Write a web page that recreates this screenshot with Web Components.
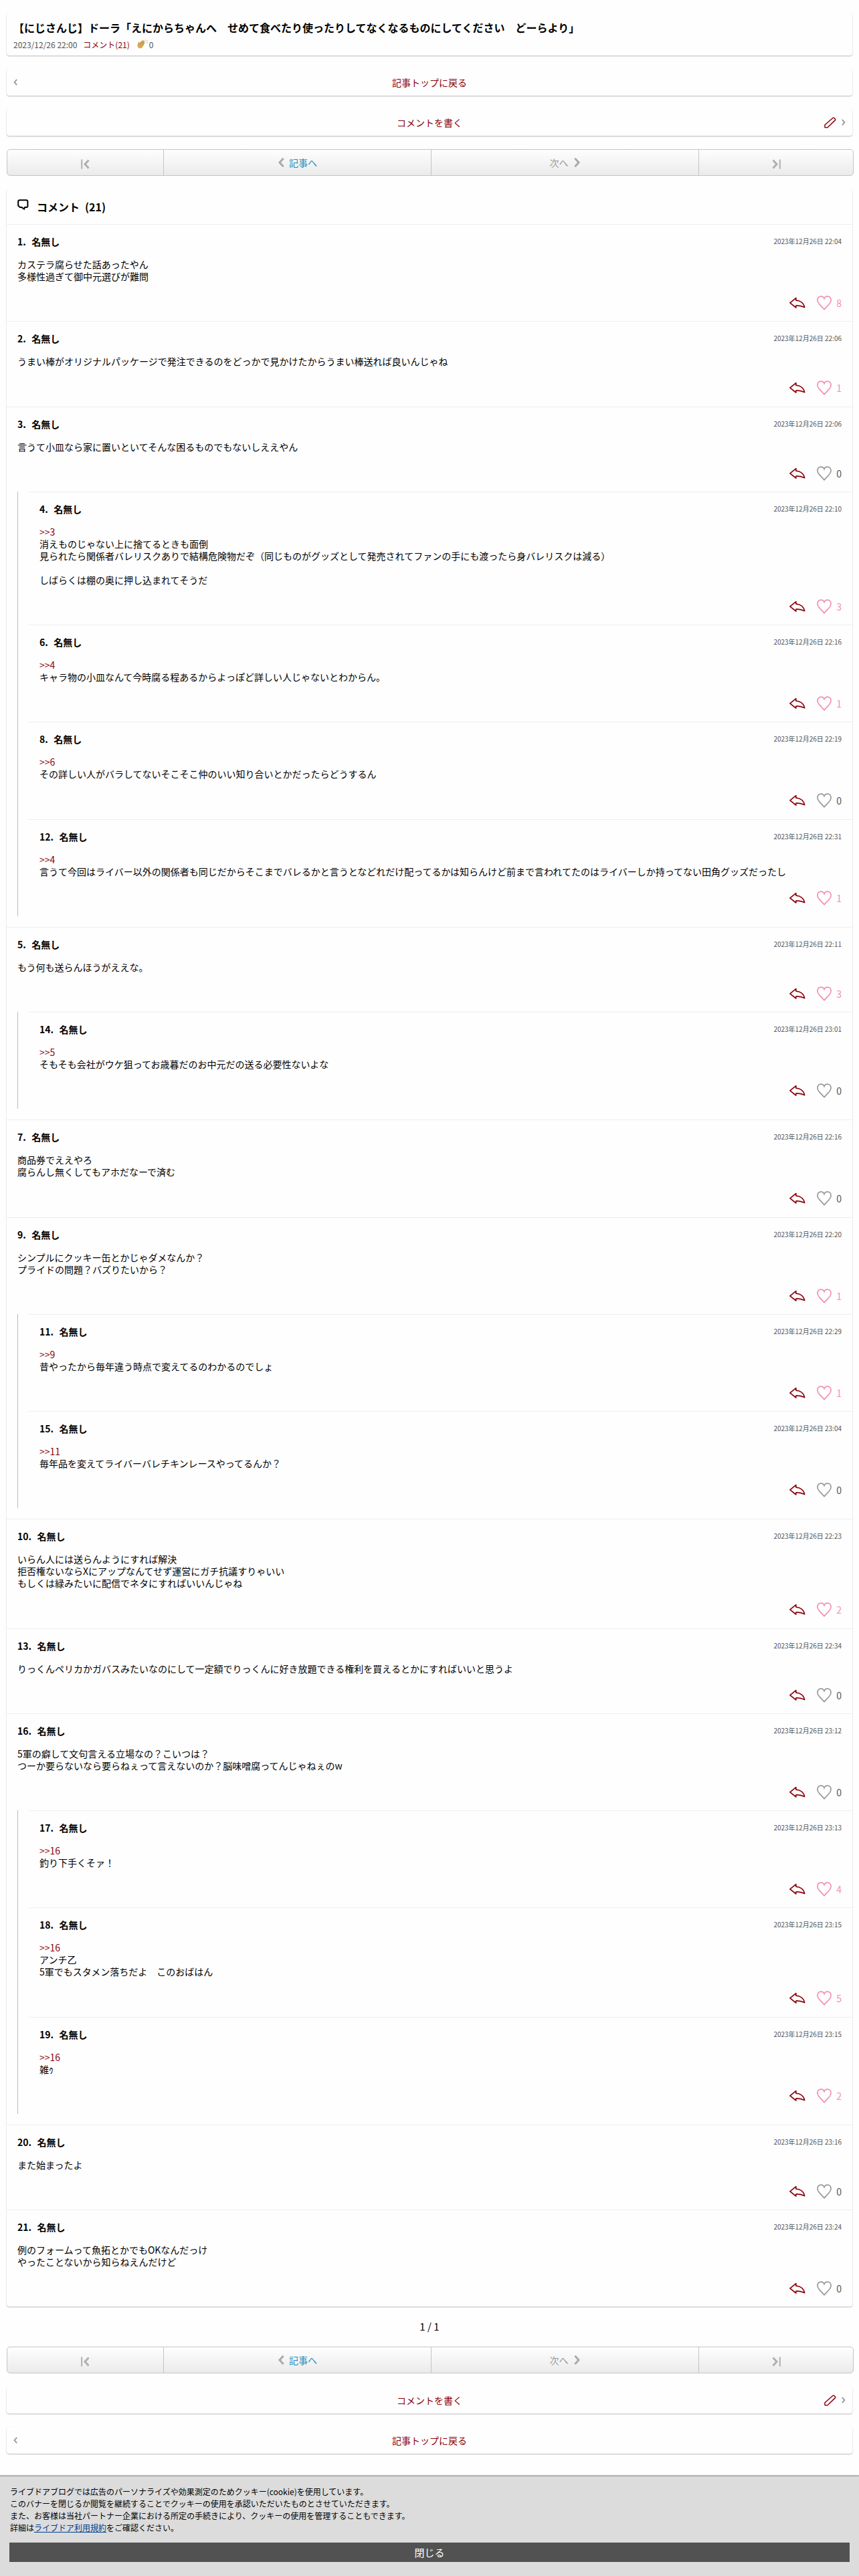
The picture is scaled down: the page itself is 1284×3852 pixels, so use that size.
<!DOCTYPE html>
<html lang="ja">
<head>
<meta charset="utf-8">
<title>コメント一覧</title>
<style>
html,body{margin:0;padding:0}
body{background:#fefefe;color:#000;font:14px/18px "Noto Sans CJK JP",sans-serif}
a{color:#8c0009;text-decoration:none}
</style>
</head>
<body>
<blog-page>
  <entry-head date="2023/12/26 22:00" comments="21" claps="0">【にじさんじ】ドーラ「えにからちゃんへ　せめて食べたり使ったりしてなくなるものにしてください　どーらより」</entry-head>
  <link-card back>記事トップに戻る</link-card>
  <link-card write>コメントを書く</link-card>
  <page-nav></page-nav>
  <comment-list count="21">
    <comment-item no="1" time="22:04" likes="8">カステラ腐らせた話あったやん<br>多様性過ぎて御中元選びが難問</comment-item>
    <comment-item no="2" time="22:06" likes="1">うまい棒がオリジナルパッケージで発注できるのをどっかで見かけたからうまい棒送れば良いんじゃね</comment-item>
    <comment-item no="3" time="22:06" likes="0">言うて小皿なら家に置いといてそんな困るものでもないしええやん</comment-item>
    <reply-thread>
      <comment-item no="4" time="22:10" likes="3"><a>&gt;&gt;3</a><br>消えものじゃない上に捨てるときも面倒<br>見られたら関係者バレリスクありで結構危険物だぞ（同じものがグッズとして発売されてファンの手にも渡ったら身バレリスクは減る）<br><br>しばらくは棚の奥に押し込まれてそうだ</comment-item>
      <comment-item no="6" time="22:16" likes="1"><a>&gt;&gt;4</a><br>キャラ物の小皿なんて今時腐る程あるからよっぽど詳しい人じゃないとわからん。</comment-item>
      <comment-item no="8" time="22:19" likes="0"><a>&gt;&gt;6</a><br>その詳しい人がバラしてないそこそこ仲のいい知り合いとかだったらどうするん</comment-item>
      <comment-item no="12" time="22:31" likes="1"><a>&gt;&gt;4</a><br>言うて今回はライバー以外の関係者も同じだからそこまでバレるかと言うとなどれだけ配ってるかは知らんけど前まで言われてたのはライバーしか持ってない田角グッズだったし</comment-item>
    </reply-thread>
    <comment-item no="5" time="22:11" likes="3">もう何も送らんほうがええな。</comment-item>
    <reply-thread>
      <comment-item no="14" time="23:01" likes="0"><a>&gt;&gt;5</a><br>そもそも会社がウケ狙ってお歳暮だのお中元だの送る必要性ないよな</comment-item>
    </reply-thread>
    <comment-item no="7" time="22:16" likes="0">商品券でええやろ<br>腐らんし無くしてもアホだなーで済む</comment-item>
    <comment-item no="9" time="22:20" likes="1">シンプルにクッキー缶とかじゃダメなんか？<br>プライドの問題？バズりたいから？</comment-item>
    <reply-thread>
      <comment-item no="11" time="22:29" likes="1"><a>&gt;&gt;9</a><br>昔やったから毎年違う時点で変えてるのわかるのでしょ</comment-item>
      <comment-item no="15" time="23:04" likes="0"><a>&gt;&gt;11</a><br>毎年品を変えてライバーバレチキンレースやってるんか？</comment-item>
    </reply-thread>
    <comment-item no="10" time="22:23" likes="2">いらん人には送らんようにすれば解決<br>拒否権ないならXにアップなんてせず運営にガチ抗議すりゃいい<br>もしくは緑みたいに配信でネタにすればいいんじゃね</comment-item>
    <comment-item no="13" time="22:34" likes="0">りっくんペリカかガバスみたいなのにして一定額でりっくんに好き放題できる権利を買えるとかにすればいいと思うよ</comment-item>
    <comment-item no="16" time="23:12" likes="0">5軍の癖して文句言える立場なの？こいつは？<br>つーか要らないなら要らねぇって言えないのか？脳味噌腐ってんじゃねぇのw</comment-item>
    <reply-thread>
      <comment-item no="17" time="23:13" likes="4"><a>&gt;&gt;16</a><br>釣り下手くそァ！</comment-item>
      <comment-item no="18" time="23:15" likes="5"><a>&gt;&gt;16</a><br>アンチ乙<br>5軍でもスタメン落ちだよ　このおばはん</comment-item>
      <comment-item no="19" time="23:15" likes="2"><a>&gt;&gt;16</a><br>雑ｩ</comment-item>
    </reply-thread>
    <comment-item no="20" time="23:16" likes="0">また始まったよ</comment-item>
    <comment-item no="21" time="23:24" likes="0">例のフォームって魚拓とかでもOKなんだっけ<br>やったことないから知らねえんだけど</comment-item>
  </comment-list>
  <page-count>1 / 1</page-count>
  <page-nav></page-nav>
  <link-card write>コメントを書く</link-card>
  <link-card back>記事トップに戻る</link-card>
</blog-page>
<cookie-banner></cookie-banner>

<script>
const ICONS = {
  bubble: [17, 17, '<path d="M3.4 1.3h9.8q2.2 0 2.2 2.2v6.6q0 2-2 2h-2.6l-.6 2.7-3.6-2.7H4L1.2 9.6V3.5q0-2.2 2.2-2.2z" fill="none" stroke="#000" stroke-width="2" stroke-linejoin="round"/>'],
  left: [6, 10, '<path d="M5.2 .8L1.6 5l3.6 4.2" fill="none" stroke="#999" stroke-width="1.9"/>'],
  right: [6, 10, '<path d="M.8 .8L4.4 5 .8 9.2" fill="none" stroke="#999" stroke-width="1.9"/>'],
  prev: [10, 14, '<path d="M8.6 .8L3 7l5.6 6.2" fill="none" stroke="#aaa" stroke-width="3"/>'],
  next: [10, 14, '<path d="M1.4 .8L7 7l-5.6 6.2" fill="none" stroke="#aaa" stroke-width="3"/>'],
  first: [13, 15, '<path d="M1.2 .5v14" stroke="#b0b0b0" stroke-width="2"/><path d="M11.5 1.5L6 7.5l5.5 6" fill="none" stroke="#b0b0b0" stroke-width="3"/>'],
  last: [13, 15, '<path d="M11.8 .5v14" stroke="#b0b0b0" stroke-width="2"/><path d="M1.5 1.5L7 7.5l-5.5 6" fill="none" stroke="#b0b0b0" stroke-width="3"/>'],
  pencil: [18, 17, '<path d="M1 15.6V11.8L13 1.3q.9-.7 1.7 0l1.7 1.7q.7.8 0 1.6L5.4 15.2q-.5.5-1.2.5z" fill="none" stroke="#8c0009" stroke-width="1.5" stroke-linejoin="round"/>'],
  reply: [24, 18, '<path d="M.9 8.8L9.8 1.6v3.5C16.5 5.4 21.5 9.4 22.6 15.6 18.2 13.4 14 12.8 9.8 13v3z" fill="none" stroke="#8c0009" stroke-width="1.7" stroke-linejoin="round"/>'],
  heart: [22, 22, '<path d="M11 20.7L4 13.2C2 11 .9 9.2 .9 6.8 .9 3.4 3.3 1.1 6.1 1.1 8.4 1.1 10.2 2.3 11 4.5c.8-2.2 2.6-3.4 4.9-3.4 2.8 0 5.2 2.3 5.2 5.7 0 2.4-1.1 4.2-3.1 6.4z" fill="none" stroke="currentColor" stroke-width="1.7"/>'],
  clap: [17, 14, '<path d="M1.2 11.8Q-.3 9.3 1 6.5L2 3.6q.8-.8 1.3.2v1.4L7.2 1.4q1.1-.5 1.1.6l1-.8q1.1-.2.9.8 1-.4 1.1.5-.1.6-.5 1 .8.1.7.9L8.8 10.4q-1.7 2.7-4.2 2.9-2.2 0-3.4-1.5z" fill="#d6ab5c"/><path d="M3.2 7.8l5-5.4M5 8.6l5.4-5.3M6.6 9.6l4.2-4.5" stroke="#a87b34" stroke-width=".6"/><path d="M12 1.8l.6-1.4M13.4 3l2.2-1.6M13.9 4.8l2.2-.1" stroke="#aaa" stroke-width=".9"/>']
};
const icon = n => { const [w, h, p] = ICONS[n]; return `<svg class="${n}" width="${w}" height="${h}" viewBox="0 0 ${w} ${h}" aria-hidden="true">${p}</svg>`; };
const CARD = 'background:#fefefe;border-radius:4px;box-shadow:0 1px 2px rgba(0,0,0,.27);box-sizing:border-box;';

function define(name, style, markup) {
  customElements.define(name, class extends HTMLElement {
    constructor() {
      super();
      this.attachShadow({ mode: 'open' });
    }
    connectedCallback() {
      this.shadowRoot.innerHTML = `<style>svg{display:block;flex:none}${style}</style>${markup(this)}`;
    }
  });
}

define('blog-page', ':host{display:flex;flex-direction:column;gap:20px;padding:20px 10px 0;height:3682px;box-sizing:border-box}', () => '<slot></slot>');

define('entry-head', `:host{display:block;${CARD}height:63px;padding:9px 10px 0}
h1{margin:0;font-size:16px;line-height:24px;font-weight:700}
div{display:flex;align-items:center;height:18px;margin-top:5px;font-size:12px;color:#555}
b{font-weight:400;color:#8c0009;margin:0 11px 0 9px}.clap{margin:-3px 1px 0 0}`,
  e => `<h1><slot></slot></h1><div><span>${e.getAttribute('date')}</span><b>コメント(${e.getAttribute('comments')})</b>${icon('clap')}<span>${e.getAttribute('claps')}</span></div>`);

define('link-card', `:host{display:grid;grid-template-columns:60px 1fr 60px;align-items:center;${CARD}height:40px;padding:0 10px;color:#8c0009;text-align:center}
.end{display:flex;justify-content:flex-end;align-items:center;gap:8px}`,
  e => `<span>${e.hasAttribute('back') ? icon('left') : ''}</span><span><slot></slot></span><span class="end">${e.hasAttribute('write') ? icon('pencil') + icon('right') : ''}</span>`);

define('page-nav', `:host{display:flex;width:1266px;height:40px;box-sizing:border-box;border:1px solid #c4c4c4;border-radius:5px;background:linear-gradient(#fefefe,#ebebeb)}
div{display:flex;align-items:center;justify-content:center;flex:0 0 399px;border-right:1px solid #c4c4c4}
.a{flex-basis:233px}.z{flex:1;border:0}
.first,.last{margin-top:5px}.prev{margin-right:7px}.next{margin-left:8px}
.p{color:#1e90c0}.n{color:#999}`,
  () => `<div class="a">${icon('first')}</div><div class="p">${icon('prev')}<span>記事へ</span></div><div class="n"><span>次へ</span>${icon('next')}</div><div class="z">${icon('last')}</div>`);

define('comment-list', `:host{display:block;${CARD}height:3166px}
header{display:flex;align-items:center;height:52px;padding-left:16px;font-size:16px;font-weight:700}
.bubble{margin:-5px 12px 0 0}i{font-style:normal;margin-left:8px}`,
  e => `<header>${icon('bubble')}<span>コメント</span><i>(${e.getAttribute('count')})</i></header><slot></slot>`);

define('reply-thread', ':host{display:block;margin:0 0 16px 16px;padding-left:16px;border-left:1px solid #bbb}', () => '<slot></slot>');

define('comment-item', `:host{display:block;border-top:1px solid #eee;padding:16px 16px 0}
.top{display:flex;justify-content:space-between;margin-bottom:16px;height:18px}
.who{display:flex;gap:8.5px;font-weight:700}
time{font-size:10px;line-height:17px;color:#555}
.act{display:flex;justify-content:flex-end;align-items:center;height:58.25px;padding-top:4px;box-sizing:border-box}
.reply{margin-right:17px}.heart{margin-right:7px;color:#999}.n{color:#555}
.liked .heart,.liked .n{color:#f48fb1}`,
  e => { const l = e.getAttribute('likes');
    return `<div class="top"><span class="who"><span>${e.getAttribute('no')}.</span><span>名無し</span></span><time>2023年12月26日 ${e.getAttribute('time')}</time></div><div><slot></slot></div><div class="act${l > 0 ? ' liked' : ''}">${icon('reply')}${icon('heart')}<span class="n">${l}</span></div>`; });

define('page-count', ':host{display:block;height:20px;line-height:20px;font-size:15px;text-align:center}', () => '<slot></slot>');

define('cookie-banner', `:host{display:block;box-sizing:border-box;height:149px;margin-top:21px;padding:14px 14px 0;background:#dcdcdc;box-shadow:0 0 2px 1px #666;clip-path:inset(-4px 0 0 0)}
p{margin:0 1px;font-size:12px;line-height:18px;color:#000}
u{color:#003d8f}
button{display:block;width:100%;height:29px;margin-top:13px;border:0;padding:0;background:#525252;color:#fff;font:15px/29px "Noto Sans CJK JP",sans-serif}`,
  () => `<p>ライブドアブログでは広告のパーソナライズや効果測定のためクッキー(cookie)を使用しています。<br>このバナーを閉じるか閲覧を継続することでクッキーの使用を承認いただいたものとさせていただきます。<br>また、お客様は当社パートナー企業における所定の手続きにより、クッキーの使用を管理することもできます。<br>詳細は<u>ライブドア利用規約</u>をご確認ください。</p><button>閉じる</button>`);
</script>
</body>
</html>
